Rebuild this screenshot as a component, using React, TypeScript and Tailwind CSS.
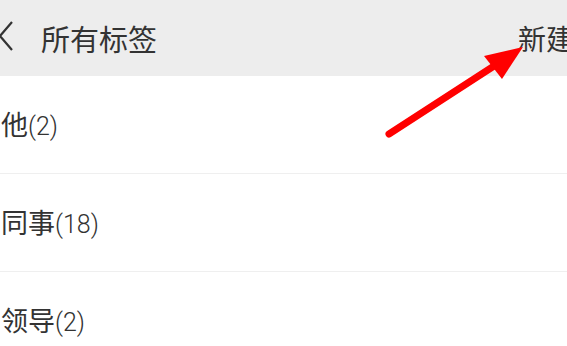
import React from 'react';

const tags = [
  { name: '他', count: 2 },
  { name: '同事', count: 18 },
  { name: '领导', count: 2 },
];

export default function App() {
  return (
    <div className="relative w-[567px] h-[346px] overflow-hidden bg-white font-['Noto_Sans_CJK_SC','Noto_Sans',sans-serif] text-[#333333]">
      <div className="h-[76px] bg-[#ededed] flex items-center">
        <svg width="16" height="32" viewBox="0 0 16 32" className="shrink-0 -ml-[3px] -mt-[2px]">
          <path d="M15 1 L3 15 L15 29" fill="none" stroke="#333333" strokeWidth="2.2" />
        </svg>
        <div className="ml-[28px] text-[29px] leading-none">所有标签</div>
        <div className="ml-auto -mr-[7px] shrink-0 text-[28px] leading-none">新建</div>
      </div>
      <div className="flex flex-col">
        {tags.map((t) => (
          <div key={t.name} className="h-[98px] flex items-center border-b border-[#efefef] pl-[1px]">
            <span className="text-[27px] leading-none">
              {t.name}
              <span className="font-['Roboto',sans-serif] font-light text-[25px]">({t.count})</span>
            </span>
          </div>
        ))}
      </div>
      <svg className="absolute left-0 top-0 pointer-events-none" width="567" height="346" viewBox="0 0 567 346">
        <line x1="389" y1="134" x2="494" y2="66" stroke="#ff0000" strokeWidth="7" strokeLinecap="round" />
        <polygon points="523,47 484,56 502,79" fill="#ff0000" />
      </svg>
    </div>
  );
}
